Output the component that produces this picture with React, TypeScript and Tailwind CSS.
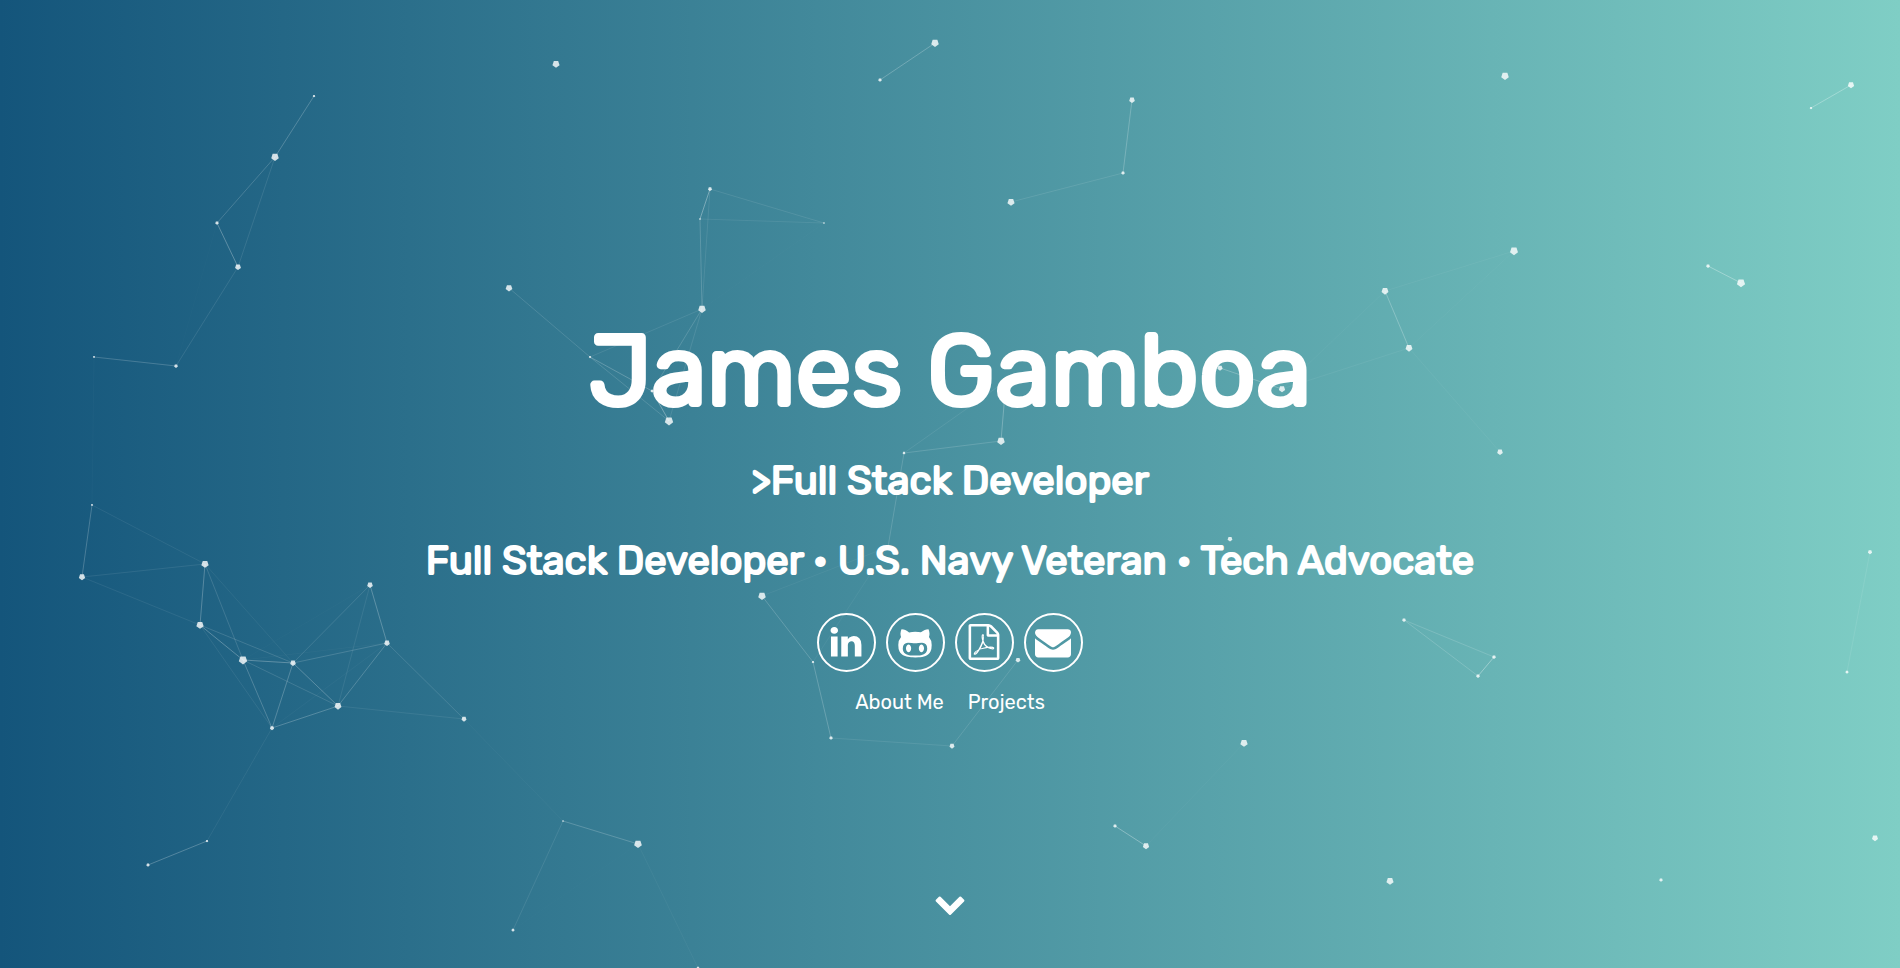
import React from "react";

type Particle = [x: number, y: number, r: number];

const FIELD_WIDTH = 1900;
const FIELD_HEIGHT = 968;
const LINK_DISTANCE = 155;
const LINK_OPACITY = 0.4;

const particles: Particle[] = [
  [92, 505, 1], [82, 577, 3], [205, 564, 3.5], [200, 625, 3.5], [243, 660, 4],
  [293, 663, 2.7], [370, 585, 2.7], [387, 643, 2.7], [338, 706, 3.3], [272, 728, 2],
  [464, 719, 2.4], [207, 841, 1.2], [148, 865, 1.6],
  [314, 96, 1.2], [275, 157, 3.6], [217, 223, 1.7], [238, 267, 2.8], [176, 366, 1.8], [94, 357, 1],
  [556, 64, 3.4], [710, 189, 1.9], [700, 219, 0.8], [824, 223, 0.8], [702, 309, 3.6],
  [509, 288, 3.2], [590, 357, 1.1], [652, 391, 1.4], [669, 421, 4],
  [880, 80, 1.7], [935, 43, 3.6], [1132, 100, 2.7], [1123, 173, 1.7], [1011, 202, 3.4],
  [1505, 76, 3.6], [1811, 108, 1.2], [1851, 85, 3],
  [1514, 251, 3.8], [1385, 291, 3.3], [1409, 348, 3.3], [1500, 452, 2.7],
  [1708, 266, 1.8], [1741, 283, 3.9],
  [1220, 368, 2.5], [1282, 389, 3], [1001, 441, 3.6], [904, 453, 1.3], [1006, 381, 1.5],
  [1230, 539, 2.3], [762, 596, 3.6], [888, 547, 1.2],
  [813, 662, 1.2], [831, 738, 1.7], [952, 746, 2.4], [1018, 660, 2.3], [1244, 743, 3.5],
  [1404, 620, 1.8], [1494, 657, 1.8], [1478, 676, 1.8], [1870, 552, 2], [1847, 672, 1.5],
  [1875, 838, 2.9], [1661, 880, 1.7], [1390, 881, 3.4],
  [563, 821, 0.8], [638, 844, 3.7], [513, 930, 1.5], [698, 968, 1.4],
  [1115, 826, 1.7], [1146, 846, 3],
];

const links = particles.flatMap(([x1, y1], i) =>
  particles.slice(i + 1).flatMap(([x2, y2]) => {
    const distance = Math.hypot(x2 - x1, y2 - y1);
    return distance < LINK_DISTANCE
      ? [{ x1, y1, x2, y2, opacity: LINK_OPACITY * (1 - distance / LINK_DISTANCE) }]
      : [];
  }),
);

function pentagon([x, y, r]: Particle) {
  return [0, 1, 2, 3, 4]
    .map((k) => {
      const angle = Math.PI / 2 + (k * 2 * Math.PI) / 5;
      return `${(x + 1.1 * r * Math.cos(angle)).toFixed(2)},${(y + 1.1 * r * Math.sin(angle)).toFixed(2)}`;
    })
    .join(" ");
}

function ParticleField() {
  return (
    <svg
      aria-hidden="true"
      className="pointer-events-none absolute inset-0 size-full"
      viewBox={`0 0 ${FIELD_WIDTH} ${FIELD_HEIGHT}`}
      preserveAspectRatio="xMidYMid slice"
    >
      {links.map(({ opacity, ...line }, i) => (
        <line key={i} {...line} stroke="#fff" strokeWidth="1" strokeOpacity={opacity} />
      ))}
      {particles.map((p, i) => (
        <polygon key={i} points={pentagon(p)} fill="#fff" fillOpacity="0.8" />
      ))}
    </svg>
  );
}

function Glyph({ d, width = 1792, className }: { d: string; width?: number; className: string }) {
  return (
    <svg aria-hidden="true" viewBox={`${(width - 1792) / 2} 0 1792 1792`} fill="currentColor" className={className}>
      <path d={d} />
    </svg>
  );
}

const social = [
  {
    label: "LinkedIn",
    href: "#linkedin",
    width: 1792,
    d: "M477 625v991h-330v-991h330zm21-306q1 73-50.5 122t-135.5 49h-2q-82 0-132-49t-50-122q0-74 51.5-122.5t134.5-48.5 133 48.5 51 122.5zm1166 729v568h-329v-530q0-105-40.5-164.5t-126.5-59.5q-63 0-105.5 34.5t-63.5 85.5q-11 30-11 81v553h-329q2-399 2-647t-1-296l-1-48h329v144h-2q20-32 41-56t56.5-52 87-43.5 114.5-15.5q171 0 275 113.5t104 332.5z",
  },
  {
    label: "GitHub",
    href: "#github",
    width: 1664,
    d: "M640 1216q0 40-12.5 82t-43 76-72.5 34-72.5-34-43-76-12.5-82 12.5-82 43-76 72.5-34 72.5 34 43 76 12.5 82zm640 0q0 40-12.5 82t-43 76-72.5 34-72.5-34-43-76-12.5-82 12.5-82 43-76 72.5-34 72.5 34 43 76 12.5 82zm160 0q0-120-69-204t-187-84q-41 0-195 21-71 11-157 11t-157-11q-152-21-195-21-118 0-187 84t-69 204q0 88 32 153.5t81 103 122 60 140 29.5 149 7h168q82 0 149-7t140-29.5 122-60 81-103 32-153.5zm224-176q0 207-61 331-38 77-105.5 133t-141 86-170 47.5-171.5 22-167 4.5q-78 0-142-3t-147.5-12.5-152.5-30-137-51.5-121-81-86-115q-62-123-62-331 0-237 136-396-27-82-27-170 0-116 51-218 108 0 190 39.5t189 123.5q147-35 309-35 148 0 280 32 105-82 187-121t189-39q51 102 51 218 0 87-27 168 136 160 136 398z",
  },
  {
    label: "Resume",
    href: "#resume",
    width: 1792,
    d: "M1596 380q28 28 48 76t20 88v1152q0 40-28 68t-68 28h-1344q-40 0-68-28t-28-68v-1600q0-40 28-68t68-28h896q40 0 88 20t76 48zm-444-244v376h376q-10-29-22-41l-313-313q-12-12-41-22zm384 1528v-1024h-416q-40 0-68-28t-28-68v-416h-768v1536h1280zm-514-593q33 26 84 56 59-7 117-7 147 0 177 49 16 22 2 52 0 1-1 2l-2 2v1q-6 38-71 38-48 0-115-20t-130-53q-221 24-392 83-153 262-242 262-15 0-28-7l-24-12q-1-1-6-5-10-10-6-36 9-40 56-91.5t132-96.5q14-9 23 6 2 2 2 4 52-85 107-197 68-136 104-262-24-82-30.5-159.5t6.5-127.5q11-40 42-40h22q23 0 35 15 18 21 9 68-2 6-4 8 1 3 1 8v30q-2 123-14 192 55 164 146 238zm-576 411q52-24 137-158-51 40-87.5 84t-49.5 74zm398-920q-15 42-2 132 1-7 7-44 0-3 7-43 1-4 4-8-1-1-1-2t-1-2-1-3q-1-22-13-36 0 1-1 2v2zm-124 661q135-54 284-81-2-1-13-9.5t-16-13.5q-76-67-127-176-27 86-83 197-30 56-45 83zm646-16q-24-24-140-24 76 28 124 28 14 0 18-1 0-1-2-3z",
  },
  {
    label: "Email",
    href: "#email",
    width: 1792,
    d: "M1792 710v794q0 66-47 113t-113 47h-1472q-66 0-113-47t-47-113v-794q44 49 101 87 362 246 497 345 57 42 92.5 65.5t94.5 48 110 24.5h2q51 0 110-24.5t94.5-48 92.5-65.5q170-123 498-345 57-39 100-87zm0-294q0 79-49 151t-122 123q-376 261-468 325-10 7-42.5 31t-54 38.5-52 32.5-57.5 27-50 9h-2q-23 0-50-9t-57.5-27-52-32.5-54-38.5-42.5-31q-91-64-262-182.5t-205-142.5q-62-42-117-115.5t-55-136.5q0-78 41.5-130t118.5-52h1472q65 0 112.5 47t47.5 113z",
  },
];

const chevronDown =
  "M1683 808l-742 741q-19 19-45 19t-45-19l-742-741q-19-19-19-45.5t19-45.5l166-165q19-19 45-19t45 19l531 531 531-531q19-19 45-19t45 19l166 165q19 19 19 45.5t-19 45.5z";

const pages = [
  { label: "About Me", href: "#about" },
  { label: "Projects", href: "#projects" },
];

export default function App() {
  return (
    <main className="relative flex min-h-screen flex-col items-center justify-center overflow-hidden bg-linear-to-r/srgb from-[#14557b] to-[#7fcec5] pt-15 text-center font-['Rubik','Roboto',sans-serif] text-white">
      <ParticleField />

      <div className="relative flex flex-col items-center">
        <h1 className="text-[100px] leading-[116px] font-normal [-webkit-text-stroke:4px_white]">James Gamboa</h1>
        <h2 className="mt-7 text-[40px] leading-12 font-normal [-webkit-text-stroke:2px_white]">&gt;Full Stack Developer</h2>
        <h2 className="mt-8 text-[40px] leading-12 font-normal [-webkit-text-stroke:2px_white]">
          Full Stack Developer • U.S. Navy Veteran • Tech Advocate
        </h2>

        <ul className="mt-7 flex gap-2.5">
          {social.map(({ label, href, d, width }) => (
            <li key={label}>
              <a
                href={href}
                aria-label={label}
                className="flex size-[59px] items-center justify-center rounded-full border-2 border-white"
              >
                <Glyph d={d} width={width} className="size-9" />
              </a>
            </li>
          ))}
        </ul>

        <nav className="mt-4 flex gap-6 text-xl leading-7 font-normal">
          {pages.map(({ label, href }) => (
            <a key={label} href={href}>
              {label}
            </a>
          ))}
        </nav>
      </div>

      <a href="#about" aria-label="Scroll down" className="absolute bottom-[49px] left-1/2 -translate-x-1/2">
        <Glyph d={chevronDown} className="size-8" />
      </a>
    </main>
  );
}
